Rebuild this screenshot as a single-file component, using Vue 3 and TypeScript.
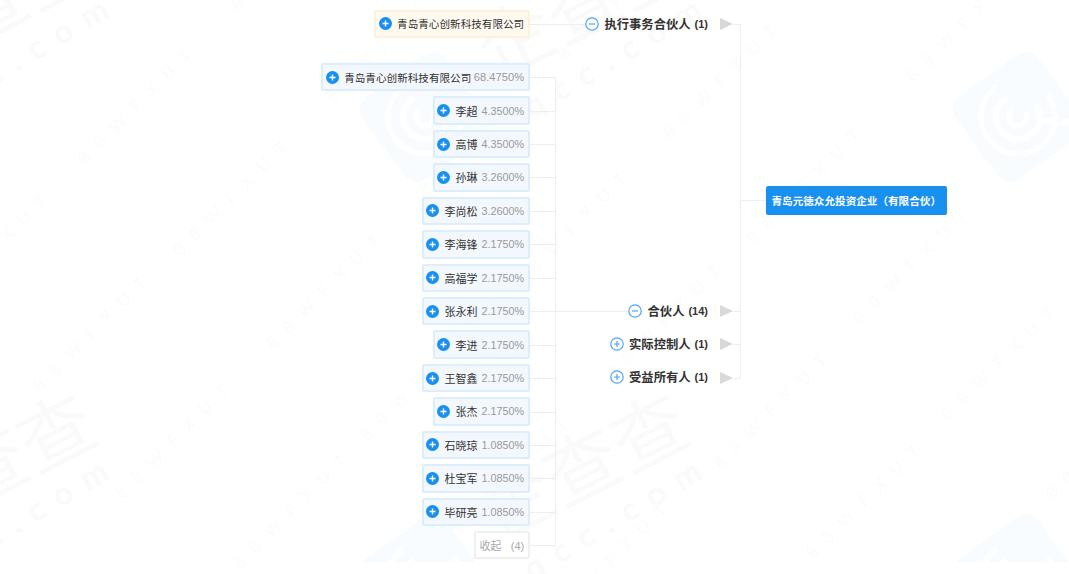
<script setup lang="ts">
interface Holder { name: string; pct: string }

const holders: Holder[] = [
  { name: '青岛青心创新科技有限公司', pct: '68.4750%' },
  { name: '李超', pct: '4.3500%' },
  { name: '高博', pct: '4.3500%' },
  { name: '孙琳', pct: '3.2600%' },
  { name: '李尚松', pct: '3.2600%' },
  { name: '李海锋', pct: '2.1750%' },
  { name: '高福学', pct: '2.1750%' },
  { name: '张永利', pct: '2.1750%' },
  { name: '李进', pct: '2.1750%' },
  { name: '王智鑫', pct: '2.1750%' },
  { name: '张杰', pct: '2.1750%' },
  { name: '石晓琼', pct: '1.0850%' },
  { name: '杜宝军', pct: '1.0850%' },
  { name: '毕研亮', pct: '1.0850%' },
]

const tiles: [number, number][] = [[0, 0], [593, 0], [0, 462], [593, 462]]

const codes: [number, number][] = [
  [85, 165], [180, 257], [40, 392], [273, 350], [238, 12], [122, 500], [240, 570], [-60, 310],
  [720, 470], [560, 620], [813, 560], [948, 422], [1053, 500], [913, 83], [1007, 177], [860, 325],
  [670, 140], [332, 104], [426, 196], [520, 288], [614, 380], [367, 442], [461, 534], [565, 61], [753, 245],
]

const rowY = Array.from({ length: 15 }, (_, i) => 77.2 + i * 33.43)
</script>

<template>
  <div class="page">
    <svg class="watermark" width="1069" height="574" viewBox="0 0 1069 574">
      <defs>
        <clipPath id="wm-clip"><rect x="0" y="0" width="1069" height="562" /></clipPath>
      </defs>
      <g clip-path="url(#wm-clip)">
        <g v-for="(t, i) in tiles" :key="'l' + i" :transform="`translate(${t[0] + 425} ${t[1] + 117}) rotate(-36)`">
          <rect class="wm-logo" x="-51" y="-51" width="102" height="102" rx="16" />
          <circle class="wm-ring" r="37" stroke-width="5" stroke-dasharray="175 58" />
          <circle class="wm-ring" r="22" stroke-width="6" stroke-dasharray="105 33" />
          <circle class="wm-ring" r="9" stroke-width="5" stroke-dasharray="42 15" />
          <path class="wm-ring" d="M14 14L42 38" stroke-width="6" />
        </g>
      </g>
      <g v-for="(t, i) in tiles" :key="i" :transform="`translate(${t[0]} ${t[1]})`">
        <text class="wm-big" transform="translate(-10 6) rotate(-27)" y="26" text-anchor="middle">企查查</text>
        <text class="wm-url" transform="translate(-61 119) rotate(-31)">qcc.com</text>
      </g>
      <text
        v-for="(c, i) in codes"
        :key="'c' + i"
        class="wm-code"
        :transform="`translate(${c[0]} ${c[1]}) rotate(-45)`"
      >88WFXUT</text>
    </svg>

    <svg class="links" width="1069" height="574" viewBox="0 0 1069 574">
      <path d="M529 24.5H586M733 24.5H740.5V378.5H733M733 344.5H740.5M733 311.5H740.5M740.5 200.5H766" />
      <path d="M555.5 77.5V544.5M555.5 311.5H628" />
      <path v-for="y in rowY" :key="y" :d="`M529 ${Math.round(y) + 0.5}H555.5`" />
      <g class="arrows">
        <polygon points="720,18 733,24 720,30" />
        <polygon points="720,305 733,311 720,317" />
        <polygon points="720,338 733,344 720,350" />
        <polygon points="720,372 733,378 720,384" />
      </g>
    </svg>

    <div class="tree">
      <div class="left">
        <div class="node node-top">
          <svg class="dot" width="13" height="13" viewBox="0 0 13 13"><circle cx="6.5" cy="6.5" r="6.5" /><path d="M3.5 6.5H9.5M6.5 3.5V9.5" /></svg>
          <span class="name">青岛青心创新科技有限公司</span>
        </div>
        <div class="list">
          <div v-for="h in holders" :key="h.name" class="node node-holder">
            <svg class="dot" width="13" height="13" viewBox="0 0 13 13"><circle cx="6.5" cy="6.5" r="6.5" /><path d="M3.5 6.5H9.5M6.5 3.5V9.5" /></svg>
            <span class="name" :class="{ person: h.name.length < 6 }">{{ h.name }}</span>
            <span class="pct">{{ h.pct }}</span>
          </div>
          <div class="node node-fold">收起&nbsp;&nbsp;&nbsp;(4)</div>
        </div>
      </div>

      <div class="branch">
        <div class="labels">
          <div class="label">
            <svg class="ring" width="14" height="14" viewBox="0 0 14 14"><circle cx="7" cy="7" r="6.2" /><path d="M4 7H10" /></svg>
            <span>执行事务合伙人</span><b>(1)</b>
          </div>
          <div class="label label-partner">
            <svg class="ring" width="14" height="14" viewBox="0 0 14 14"><circle cx="7" cy="7" r="6.2" /><path d="M4 7H10" /></svg>
            <span>合伙人</span><b>(14)</b>
          </div>
          <div class="label">
            <svg class="ring" width="14" height="14" viewBox="0 0 14 14"><circle cx="7" cy="7" r="6.2" /><path d="M4 7H10M7 4V10" /></svg>
            <span>实际控制人</span><b>(1)</b>
          </div>
          <div class="label">
            <svg class="ring" width="14" height="14" viewBox="0 0 14 14"><circle cx="7" cy="7" r="6.2" /><path d="M4 7H10M7 4V10" /></svg>
            <span>受益所有人</span><b>(1)</b>
          </div>
        </div>
        <div class="root">青岛元徳众允投资企业（有限合伙）</div>
      </div>
    </div>
  </div>
</template>

<style scoped>
.page {
  position: relative;
  width: 1069px;
  height: 574px;
  overflow: hidden;
  background: #fff;
  font-family: "Liberation Sans", "Noto Sans CJK SC", sans-serif;
  color: #333;
}
.watermark,
.links {
  position: absolute;
  left: 0;
  top: 0;
  pointer-events: none;
}
.wm-logo { fill: #f8fcfe; }
.wm-ring { fill: none; stroke: #fff; }
.wm-big {
  font-family: "Noto Sans CJK SC", sans-serif;
  font-size: 75px;
  fill: #fafafa;
}
.wm-url {
  font-family: "Lato", sans-serif;
  font-size: 32px;
  font-weight: 700;
  letter-spacing: 14px;
  fill: #fafafa;
}
.wm-code {
  font-family: "Lato", sans-serif;
  font-size: 17px;
  letter-spacing: 12px;
  fill: #fcfcfc;
}
.links path {
  fill: none;
  stroke: #eeeeee;
  stroke-width: 1;
}
.arrows polygon { fill: #d9d9d9; }

.tree {
  position: relative;
  display: flex;
  align-items: flex-start;
  height: 574px;
}
.left {
  width: 529.5px;
  flex: none;
  display: flex;
  flex-direction: column;
  align-items: flex-end;
  padding-top: 9.5px;
  box-sizing: border-box;
}
.list {
  display: flex;
  flex-direction: column;
  align-items: flex-end;
  gap: 5px;
  margin-top: 25.1px;
}
.node {
  display: flex;
  align-items: center;
  box-sizing: border-box;
  height: 28.43px;
  padding: 0 3.3px 0 2.5px;
  border-radius: 2px;
  font-size: 10.6px;
  white-space: nowrap;
}
.node-top {
  background: #fffaf0;
  border: 2px solid #fdf1dd;
}
.node-holder {
  background: #f3f8fe;
  border: 2px solid #dcedfc;
}
.node-fold {
  background: #fff;
  border: 2px solid #f0f0f0;
  color: #aaa;
  padding: 0 3.3px;
  font-size: 11px;
}
.dot { flex: none; margin-right: 5.5px; }
.dot circle { fill: #1890f0; }
.dot path { stroke: #fff; stroke-width: 1.4; fill: none; }
.name { color: #333; }
.name.person { font-size: 11px; }
.pct {
  margin-left: 2.5px;
  color: #999;
  font-size: 11.2px;
}
.name.person + .pct {
  margin-left: 4px;
  font-size: 10.8px;
}

.branch {
  display: flex;
  align-items: center;
  margin-top: 7px;
}
.labels {
  width: 178.5px;
  flex: none;
  display: flex;
  flex-direction: column;
  align-items: flex-end;
}
.label {
  display: flex;
  align-items: center;
  justify-content: flex-end;
  height: 33.43px;
  font-size: 12.3px;
  font-weight: 700;
  color: #333;
  white-space: nowrap;
}
.label b {
  margin-left: 4px;
  font-size: 11px;
}
.label-partner { margin-top: 253.5px; }
.ring { flex: none; margin-right: 5.5px; }
.ring circle { fill: #fff; stroke: #4ea6f5; stroke-width: 1.2; }
.ring path { stroke: #4ea6f5; stroke-width: 1.2; fill: none; }
.root {
  margin-left: 58px;
  width: 181px;
  height: 29px;
  box-sizing: border-box;
  padding-left: 5.5px;
  display: flex;
  align-items: center;
  background: #1890f0;
  border-radius: 2px;
  color: #fff;
  font-size: 10.6px;
  font-weight: 700;
  white-space: nowrap;
}
</style>

<style>
html, body { margin: 0; background: #fff; }
</style>
